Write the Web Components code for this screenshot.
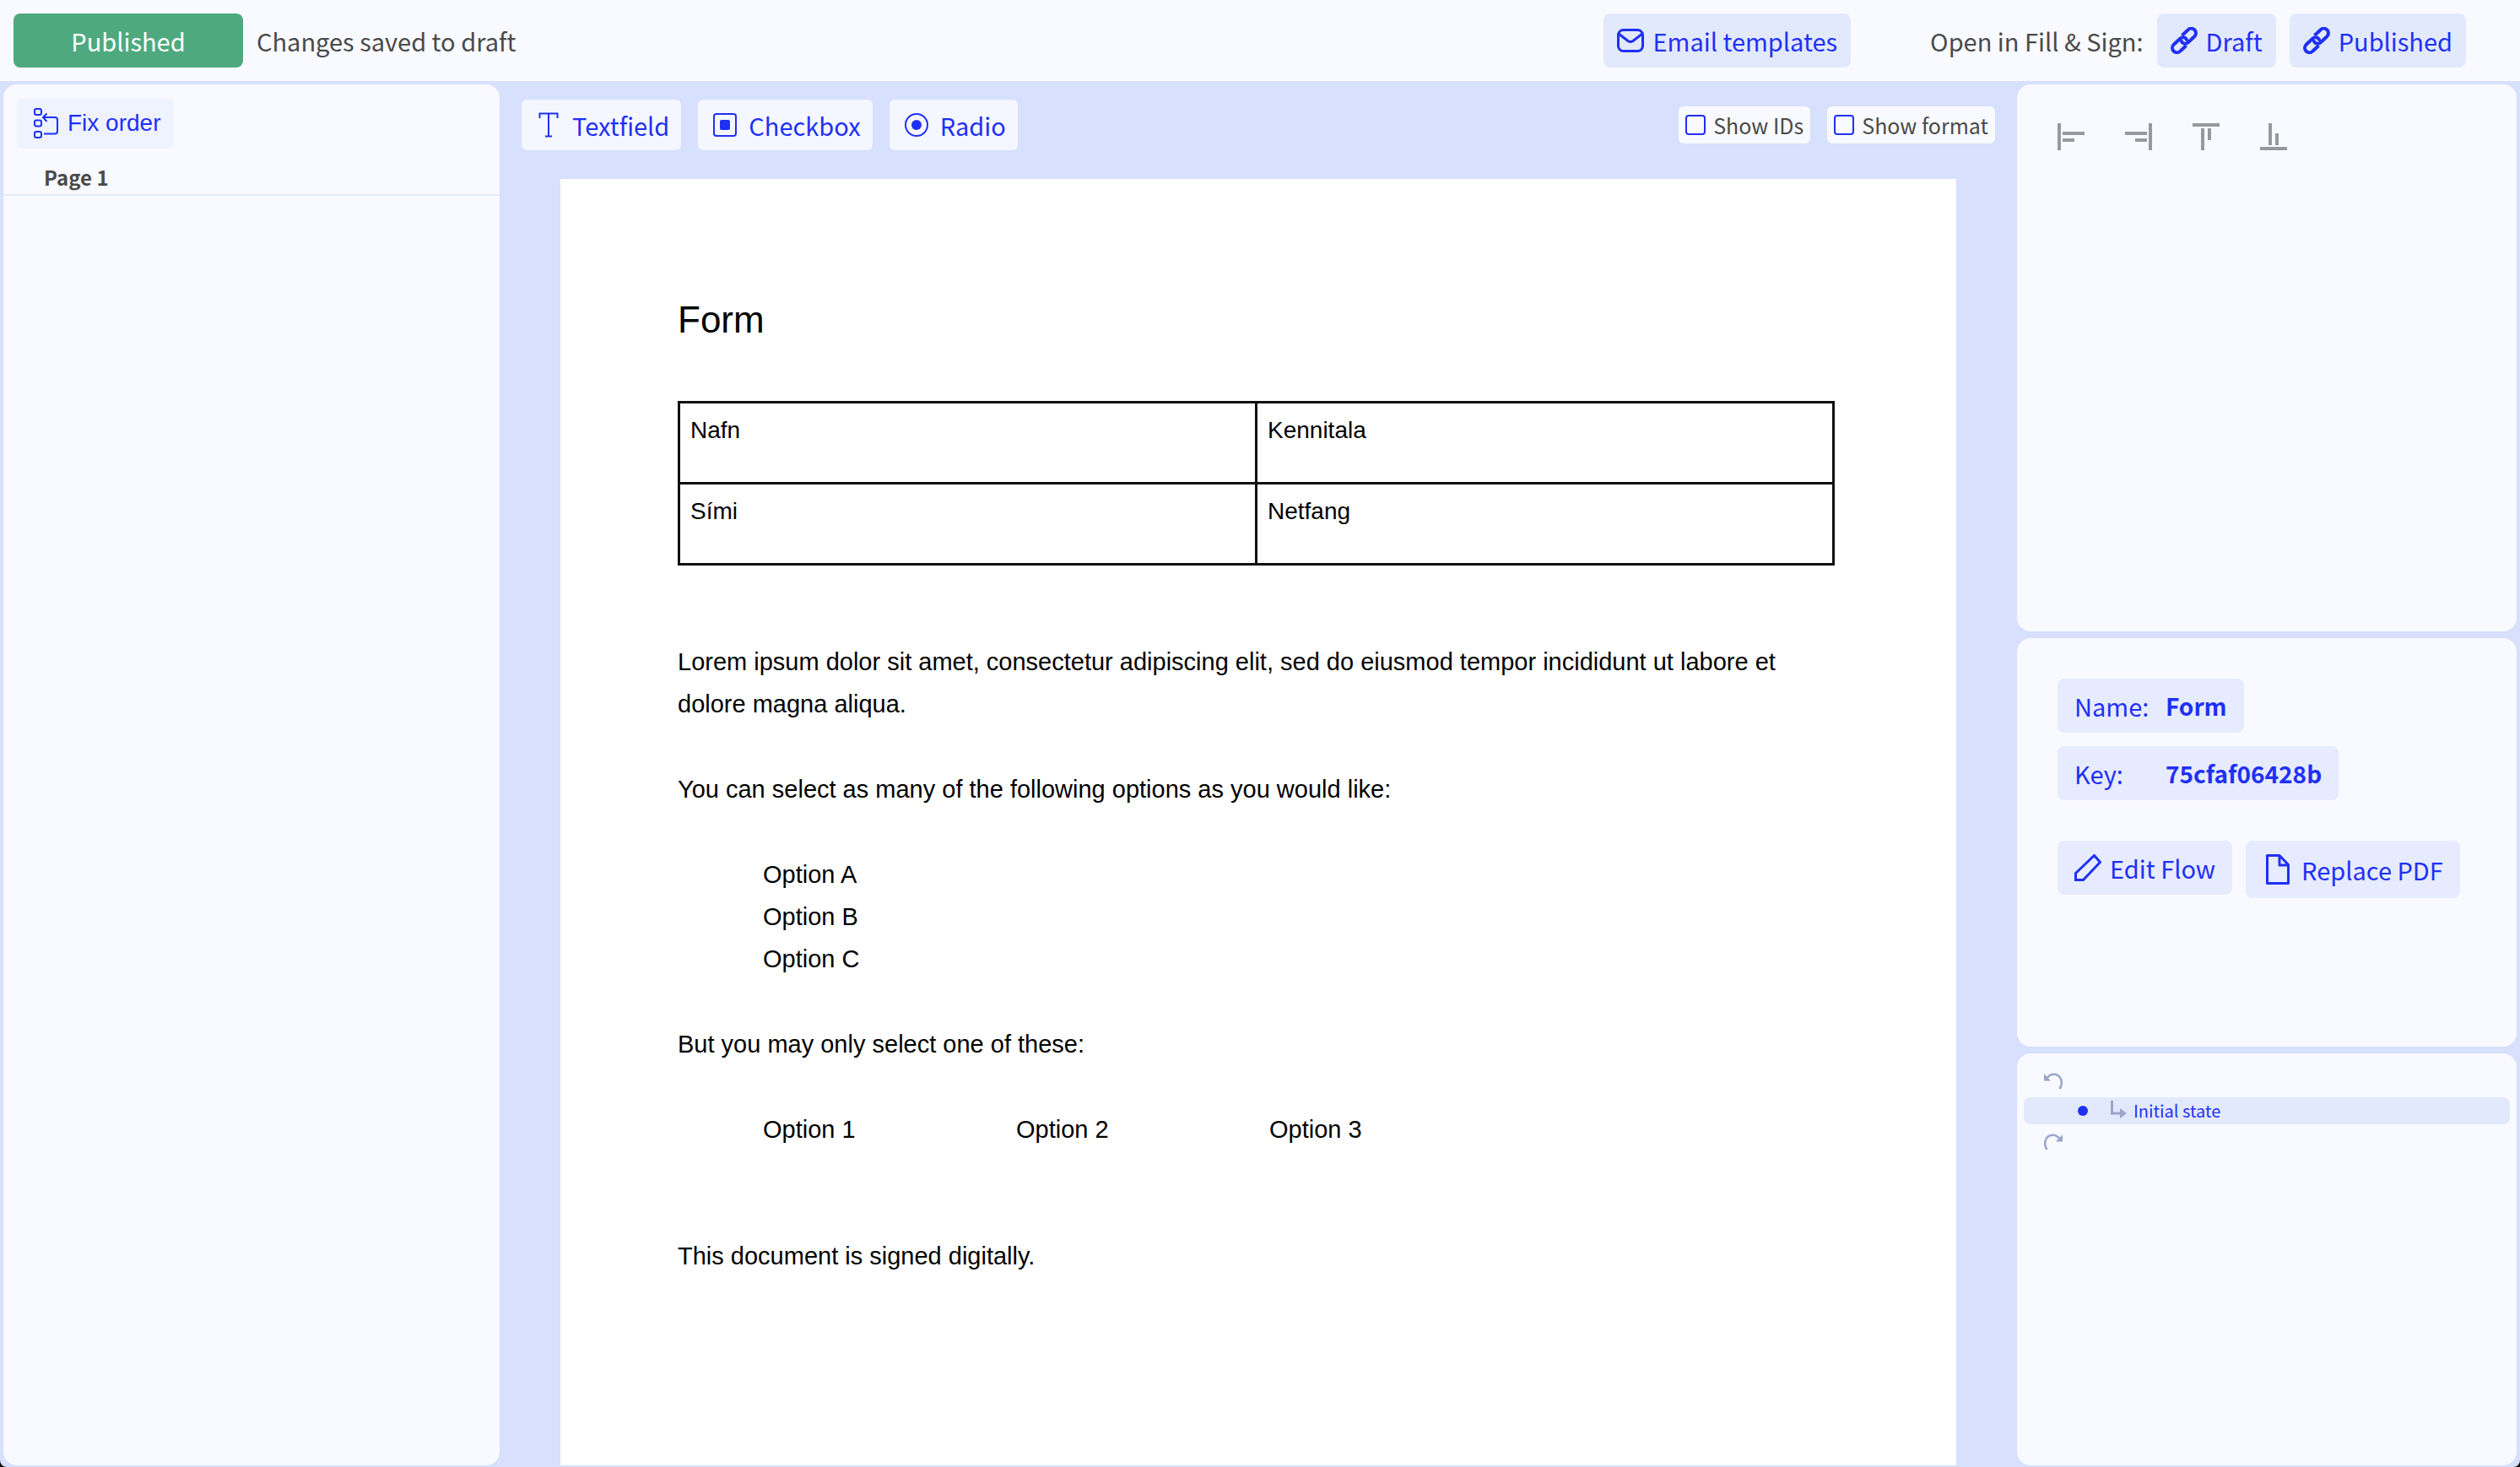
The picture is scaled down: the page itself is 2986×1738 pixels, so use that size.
<!DOCTYPE html>
<html lang="en">
<head>
<meta charset="utf-8">
<title>Form editor</title>
<style>
html, body { margin: 0; height: 100%; }
html { background: #111; }
body { color: #4a4a4a; font: 29px/40px "Noto Sans CJK SC", "Noto Sans CJK JP", sans-serif; overflow: hidden; }
</style>
</head>
<body>
<form-editor></form-editor>

<script>
const define = (name, html, setup) => {
  const template = document.createElement("template");
  template.innerHTML = html;
  customElements.define(name, class extends HTMLElement {
    constructor() {
      super();
      this.attachShadow({ mode: "open" }).append(template.content.cloneNode(true));
    }
    connectedCallback() { if (setup) setup(this, this.shadowRoot); }
  });
};

const icons = {
  mail: [32, 28, '<g fill="none" stroke="currentColor" stroke-width="3" stroke-linejoin="round"><rect x="1.5" y="1.5" width="29" height="25" rx="6"/><path d="M2 6l11 8.500q3 2 6 0L30 6"/></g>'],
  link: [32, 32, '<g fill="none" stroke="currentColor" stroke-width="4"><path d="M13.500 10L20.500 3.500a5.300 5.300 0 0 1 8 7.500L20.500 18.500a4.800 4.800 0 0 1-7-.500q-1-1.500-.500-3"/><path d="M18.500 22L11.500 28.500a5.300 5.300 0 0 1-8-7.500L11.500 13.500a4.800 4.800 0 0 1 7 .500q1 1.500.500 3"/></g>'],
  order: [30, 36, '<g fill="none" stroke="currentColor" stroke-width="2"><rect x="1" y="1" width="8" height="7" rx="2"/><rect x="1" y="14.500" width="8" height="7" rx="2"/><rect x="1" y="28" width="8" height="7" rx="2"/><path d="M12 30.500h13q3 0 3-3V14q0-3-3-3H11M15.500 6.500L11 11l4.500 5"/></g>'],
  text: [28, 30, '<path d="M3.500 7V1.500h21V7M14 1.500V28.500M10 28.500h8" fill="none" stroke="currentColor" stroke-width="2"/>'],
  check: [28, 28, '<rect x="1" y="1" width="26" height="26" rx="3" fill="none" stroke="currentColor" stroke-width="2"/><rect x="8" y="8" width="12" height="12" rx="2" fill="currentColor"/>'],
  radio: [28, 28, '<circle cx="14" cy="14" r="13" fill="none" stroke="currentColor" stroke-width="2"/><circle cx="14" cy="14" r="6" fill="currentColor"/>'],
  left: [32, 32, '<path d="M0 0h4v32H0zM6 10h26v4H6zM6 18h14v4H6z" fill="currentColor"/>'],
  right: [32, 32, '<path d="M28 0h4v32h-4zM0 10h26v4H0zM12 18h14v4H12z" fill="currentColor"/>'],
  top: [32, 32, '<path d="M0 0h32v4H0zM10 6h4v26h-4zM18 6h4v14h-4z" fill="currentColor"/>'],
  bottom: [32, 32, '<path d="M0 28h32v4H0zM10 0h4v26h-4zM18 12h4v14h-4z" fill="currentColor"/>'],
  pencil: [32, 32, '<path d="M1.500 22.500L23.500 1.500 30.500 9.500 10.500 30.500H1.500z" fill="none" stroke="currentColor" stroke-width="3"/>'],
  file: [28, 36, '<path d="M1.500 1.500h14.500l10.500 11v22h-25zM16 1.500v11.500h10.500" fill="none" stroke="currentColor" stroke-width="3" stroke-linejoin="round"/>'],
  undo: [22, 22, '<path d="M3.500 8.500C7 2.500 15 2 19 7.500q4 7-.500 13.500" fill="none" stroke="currentColor" stroke-width="2.500"/><path d="M0 3v8.500h8z" fill="currentColor"/>'],
  redo: [22, 22, '<path d="M18.500 8.500C15 2.500 7 2 3 7.500q-4 7 .500 13.500" fill="none" stroke="currentColor" stroke-width="2.500"/><path d="M22 3v8.500h-8z" fill="currentColor"/>'],
  branch: [20, 24, '<path d="M1.500 0v15H12" fill="none" stroke="currentColor" stroke-width="3"/><path d="M11 9l8 6-8 6z" fill="currentColor"/>']
};

define("ui-icon", `<style>:host { display: block; flex: none; } svg { display: block; }</style><span></span>`, (el, root) => {
  const [w, h, body] = icons[el.getAttribute("name")];
  root.querySelector("span").innerHTML = `<svg width="${w}" height="${h}" viewBox="0 0 ${w} ${h}" aria-hidden="true">${body}</svg>`;
});

define("ui-button", `<style>
  :host { display: block; }
  button { display: flex; align-items: center; justify-content: center; box-sizing: border-box; width: 100%; height: 64px; gap: 10px; margin: 0; padding: 0 16px; border: 0; border-radius: 8px; background: #e3e9fd; color: #1f30f5; font: inherit; white-space: nowrap; cursor: pointer; }
  :host([kind=success]) button { background: #4eaa7e; color: #fff; }
  :host([kind=tool]) button { height: 60px; gap: 14px; padding: 0 14px 0 18px; border-radius: 6px; background: #f4f7ff; }
  :host([kind=order]) button { height: 60px; padding: 0 16px 0 20px; background: #eef3ff; font: 28px/40px "Liberation Sans", Arial, sans-serif; }
  :host([kind=panel]) button { padding: 0 20px; background: #e6ebff; }
  :host([kind=file]) button { height: 68px; gap: 14px; padding: 0 20px 0 24px; background: #e6ebff; }
  :host([kind=bare]) button { height: auto; padding: 0; background: none; color: inherit; }
</style><button type="button"><slot></slot></button>`);

define("ui-toggle", `<style>
  :host { display: block; }
  label { display: flex; align-items: center; gap: 9px; height: 44px; padding: 0 8px; border-radius: 6px; background: #f9faff; font-size: 25px; line-height: 40px; white-space: nowrap; }
  input { appearance: none; box-sizing: border-box; width: 24px; height: 24px; margin: 0; border: 2px solid #1f30f5; border-radius: 4px; }
  input:checked { background: #1f30f5; }
</style><label><input type="checkbox"><slot></slot></label>`);

define("ui-panel", `<style>
  :host { display: block; box-sizing: border-box; border-radius: 16px; background: #f9faff; overflow: hidden; min-height: 0; }
</style><slot></slot>`);

define("app-header", `<style>
  :host { display: block; }
  header { display: flex; align-items: center; box-sizing: border-box; height: 96px; padding: 0 64px 0 16px; background: #f9faff; white-space: nowrap; }
  .state { width: 272px; margin-right: 16px; }
  .mail { margin-left: auto; margin-right: 94px; }
  .open { margin-right: 16px; }
  .draft { margin-right: 16px; }
</style>
<header>
  <ui-button class="state" kind="success">Published</ui-button>
  <span>Changes saved to draft</span>
  <ui-button class="mail"><ui-icon name="mail"></ui-icon>Email templates</ui-button>
  <span class="open">Open in Fill &amp; Sign:</span>
  <ui-button class="draft"><ui-icon name="link"></ui-icon>Draft</ui-button>
  <ui-button><ui-icon name="link"></ui-icon>Published</ui-button>
</header>`);

define("page-list", `<style>
  :host { display: block; }
  .bar { display: flex; padding: 16px 16px 12px; }
  h2 { margin: 0; padding: 2px 48px 0; border-bottom: 2px solid #e4eaff; font-size: 24px; line-height: 40px; font-weight: 700; }
</style>
<div class="bar"><ui-button kind="order"><ui-icon name="order"></ui-icon>Fix order</ui-button></div>
<h2>Page 1</h2>`);

define("doc-page", `<style>
  :host { display: block; box-sizing: border-box; padding: 140px 144px 0 139px; background: #fff; color: #000; font: 29px/50px "Liberation Sans", Arial, sans-serif; overflow: hidden; }
  h1 { margin: 0; font-size: 44px; line-height: 54px; font-weight: 400; }
  table { width: 100%; margin: 69px 0 89px; border: 3px solid #111; border-collapse: collapse; table-layout: fixed; }
  td { box-sizing: border-box; height: 96px; padding: 12px; border: 3px solid #111; vertical-align: top; font-size: 28px; line-height: 40px; }
  p, ul { margin: 0 0 51px; padding: 0; list-style: none; }
  ul { padding-left: 101px; }
  .row { display: flex; margin-bottom: 100px; }
  .row li { width: 300px; }
</style>
<h1>Form</h1>
<table><tbody><tr><td>Nafn</td><td>Kennitala</td></tr><tr><td>Sími</td><td>Netfang</td></tr></tbody></table>
<p>Lorem ipsum dolor sit amet, consectetur adipiscing elit, sed do eiusmod tempor incididunt ut labore et dolore magna aliqua.</p>
<p>You can select as many of the following options as you would like:</p>
<ul><li>Option A</li><li>Option B</li><li>Option C</li></ul>
<p>But you may only select one of these:</p>
<ul class="row"><li>Option 1</li><li>Option 2</li><li>Option 3</li></ul>
<p>This document is signed digitally.</p>`);

define("doc-canvas", `<style>
  :host { display: flex; flex-direction: column; min-width: 0; min-height: 0; }
  nav { display: flex; align-items: flex-start; gap: 20px; padding: 18px 18px 34px; }
  .toggles { display: flex; gap: 20px; margin-left: auto; padding-top: 8px; }
  doc-page { flex: 1; margin: 0 64px; min-height: 0; }
</style>
<nav>
  <ui-button kind="tool"><ui-icon name="text"></ui-icon>Textfield</ui-button>
  <ui-button kind="tool"><ui-icon name="check"></ui-icon>Checkbox</ui-button>
  <ui-button kind="tool"><ui-icon name="radio"></ui-icon>Radio</ui-button>
  <div class="toggles"><ui-toggle>Show IDs</ui-toggle><ui-toggle>Show format</ui-toggle></div>
</nav>
<doc-page></doc-page>`);

define("align-tools", `<style>
  :host { display: flex; gap: 48px; padding: 46px 48px; color: #96999e; }
</style>
<ui-button kind="bare" title="Align left"><ui-icon name="left"></ui-icon></ui-button>
<ui-button kind="bare" title="Align right"><ui-icon name="right"></ui-icon></ui-button>
<ui-button kind="bare" title="Align top"><ui-icon name="top"></ui-icon></ui-button>
<ui-button kind="bare" title="Align bottom"><ui-icon name="bottom"></ui-icon></ui-button>`);

define("form-details", `<style>
  :host { display: flex; flex-direction: column; align-items: flex-start; gap: 16px; padding: 48px; }
  b { font-size: 28px; font-weight: 700; }
  .key { width: 98px; text-align: left; }
  .actions { display: flex; align-items: flex-start; gap: 16px; padding-top: 32px; }
</style>
<ui-button kind="panel"><span class="key">Name:</span><b>Form</b></ui-button>
<ui-button kind="panel"><span class="key">Key:</span><b>75cfaf06428b</b></ui-button>
<div class="actions">
  <ui-button kind="panel"><ui-icon name="pencil"></ui-icon>Edit Flow</ui-button>
  <ui-button kind="file"><ui-icon name="file"></ui-icon>Replace PDF</ui-button>
</div>`);

define("edit-history", `<style>
  :host { display: flex; flex-direction: column; gap: 8px; padding: 20px 8px; color: #9aa5c8; font-size: 20px; line-height: 32px; }
  .step { display: flex; align-items: center; height: 24px; padding-left: 24px; }
  .state { display: flex; align-items: center; height: 32px; padding-left: 64px; border-radius: 8px; background: #e3e9fd; }
  i { width: 12px; height: 12px; margin-right: 27px; border-radius: 50%; background: #1f30f5; }
  span { margin-left: 7px; color: #1f30f5; }
</style>
<div class="step"><ui-button kind="bare" title="Undo"><ui-icon name="undo"></ui-icon></ui-button></div>
<div class="state"><i></i><ui-icon name="branch"></ui-icon><span>Initial state</span></div>
<div class="step"><ui-button kind="bare" title="Redo"><ui-icon name="redo"></ui-icon></ui-button></div>`);

define("form-editor", `<style>
  :host { display: flex; flex-direction: column; height: 100vh; border-radius: 0 0 8px 8px; background: #d7e0fd; overflow: hidden; }
  main { flex: 1; display: grid; grid-template-columns: 588px minmax(0, 1fr) 592px; gap: 8px; padding: 4px 4px 2px; min-height: 0; }
  aside { display: grid; grid-template-rows: 648px 484px minmax(0, 1fr); gap: 8px; min-height: 0; }
</style>
<app-header></app-header>
<main>
  <ui-panel><page-list></page-list></ui-panel>
  <doc-canvas></doc-canvas>
  <aside>
    <ui-panel><align-tools></align-tools></ui-panel>
    <ui-panel><form-details></form-details></ui-panel>
    <ui-panel><edit-history></edit-history></ui-panel>
  </aside>
</main>`);
</script>
</body>
</html>
